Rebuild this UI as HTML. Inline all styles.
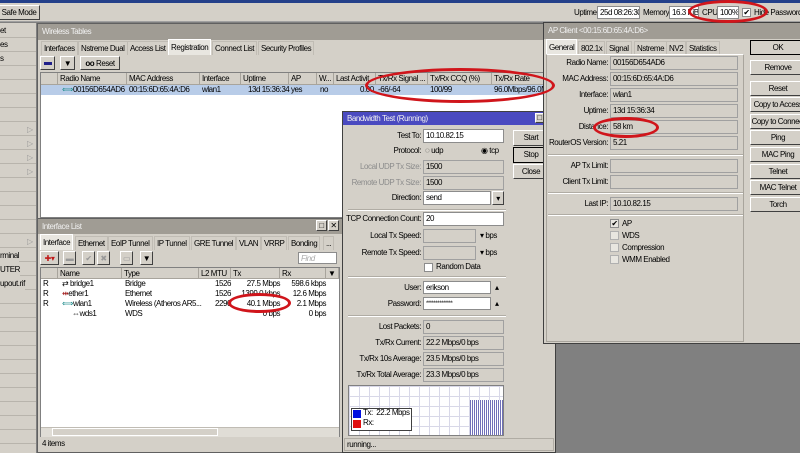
<!DOCTYPE html>
<html><head><meta charset="utf-8"><style>
*{box-sizing:border-box;margin:0;padding:0}
body{width:800px;height:453px;overflow:hidden;position:relative;background:#808080;font-family:"Liberation Sans",sans-serif;font-size:8px;color:#000;letter-spacing:-0.45px}
div,span{position:absolute;white-space:nowrap}
.g{background:#d4d0c8}
.t{line-height:12px}
.btn{background:#d4d0c8;border:1px solid;border-color:#fff #404040 #404040 #fff;text-align:center;line-height:13px;overflow:hidden}
.in{background:#fff;border:1px solid #8c8c8c;padding-left:2px;line-height:12px;overflow:hidden}
.ro{background:#d4d0c8;border:1px solid #a0a0a0;padding-left:2px;line-height:12px}
.lb{text-align:right;line-height:14px}
.dis{color:#8c8c8c}
.tab{background:#d4d0c8;border:1px solid #c0bcb4;border-bottom:none;line-height:13px;padding:0 2px}
.tsel{background:#e8e6e0;border:1px solid #fff;border-bottom:none}
.hdr{background:#d4d0c8;border-right:1px solid #a8a49c;border-bottom:1px solid #a8a49c;line-height:11px;padding-left:2px;overflow:hidden}
.cell{line-height:10px;padding-left:2px}
.ttl{color:#f0f0f0;line-height:16px;padding-left:4px}
.sep{border-top:1px solid #b0aca4;border-bottom:1px solid #fff;height:2px}
.ell{border:3px solid #d0151b;border-radius:50%}
.cb{width:9px;height:9px;background:#fff;border:1px solid #8c8c8c}
</style></head><body>
<div style="left:0;top:0;width:800px;height:3px;background:#24408a"></div>
<div class="g" style="left:0;top:3px;width:800px;height:19px;border-bottom:1px solid #a0a0a0"></div>
<div class="btn" style="left:-2px;top:5px;width:42px;height:15px">Safe Mode</div>
<div class="t" style="left:574px;top:7px">Uptime:</div><div class="in" style="left:597px;top:6px;width:43px;height:13px">25d 08:26:30</div>
<div class="t" style="left:643px;top:7px">Memory:</div><div class="in" style="left:669px;top:6px;width:30px;height:13px">16.3 KiB</div>
<div class="t" style="left:702px;top:7px">CPU:</div><div class="in" style="left:717px;top:6px;width:22px;height:13px">100%</div>
<div class="cb" style="left:742px;top:8px;font-size:8px;line-height:7px;text-align:center">✔</div>
<div class="t" style="left:754px;top:7px">Hide Passwords</div>
<div class="g" style="left:0;top:23px;width:37px;height:430px;border-right:1px solid #808080"></div>
<div style="left:0;top:24px;width:36px;height:420px;background:repeating-linear-gradient(#d4d0c8 0 13px,#b8b4ac 13px 14px)"></div>
<div class="t" style="left:0;top:25px">et</div><div class="t" style="left:0;top:39px">es</div><div class="t" style="left:0;top:53px">s</div>
<div style="left:27px;top:124px;color:#999;line-height:12px">▷</div><div style="left:27px;top:138px;color:#999;line-height:12px">▷</div><div style="left:27px;top:152px;color:#999;line-height:12px">▷</div><div style="left:27px;top:166px;color:#999;line-height:12px">▷</div><div style="left:27px;top:236px;color:#999;line-height:12px">▷</div>
<div class="t" style="left:0;top:250px;background:#d4d0c8">rminal</div><div class="t" style="left:0;top:264px;background:#d4d0c8">UTER</div><div class="t" style="left:0;top:278px;background:#d4d0c8">upout.rif</div>
<div class="g" style="left:37px;top:23px;width:510px;height:197px;border:1px solid #606060"></div>
<div class="ttl" style="left:38px;top:24px;width:508px;height:16px;background:#a09c94">Wireless Tables</div>
<div class="tab" style="left:41px;top:41px">Interfaces</div><div class="tab" style="left:78px;top:41px">Nstreme Dual</div><div class="tab" style="left:127px;top:41px">Access List</div><div class="tab tsel" style="left:168px;top:39px;line-height:15px">Registration</div><div class="tab" style="left:212px;top:41px">Connect List</div><div class="tab" style="left:258px;top:41px">Security Profiles</div>
<div class="btn" style="left:40px;top:56px;width:15px;height:14px"><span style="left:3px;top:5px;width:8px;height:3px;background:#20208a"></span></div>
<div class="btn" style="left:60px;top:56px;width:15px;height:14px">▼</div>
<div class="btn" style="left:80px;top:56px;width:40px;height:14px"><b>oo</b> Reset</div>
<div style="left:40px;top:72px;width:506px;height:146px;background:#fff;border:1px solid #808080"></div>
<div class="hdr" style="left:41px;top:73px;width:17px;height:12px"></div>
<div class="hdr" style="left:58px;top:73px;width:69px;height:12px">Radio Name</div>
<div class="hdr" style="left:127px;top:73px;width:73px;height:12px">MAC Address</div>
<div class="hdr" style="left:200px;top:73px;width:41px;height:12px">Interface</div>
<div class="hdr" style="left:241px;top:73px;width:48px;height:12px">Uptime</div>
<div class="hdr" style="left:289px;top:73px;width:28px;height:12px">AP</div>
<div class="hdr" style="left:317px;top:73px;width:17px;height:12px">W...</div>
<div class="hdr" style="left:334px;top:73px;width:42px;height:12px">Last Activit</div>
<div class="hdr" style="left:376px;top:73px;width:52px;height:12px">Tx/Rx Signal ...</div>
<div class="hdr" style="left:428px;top:73px;width:64px;height:12px">Tx/Rx CCQ (%)</div>
<div class="hdr" style="left:492px;top:73px;width:54px;height:12px">Tx/Rx Rate</div>
<div style="left:41px;top:85px;width:505px;height:10px;background:#b8cce8"></div>
<div class="cell" style="left:60px;top:85px"><span style="left:0;color:#1a8a8a;position:relative">⟺</span>00156D654AD6</div>
<div class="cell" style="left:127px;top:85px">00:15:6D:65:4A:D6</div>
<div class="cell" style="left:200px;top:85px">wlan1</div>
<div class="cell" style="left:246px;top:85px">13d 15:36:34</div>
<div class="cell" style="left:289px;top:85px">yes</div>
<div class="cell" style="left:318px;top:85px">no</div>
<div class="cell" style="left:358px;top:85px">0.00</div>
<div class="cell" style="left:376px;top:85px">-66/-64</div>
<div class="cell" style="left:428px;top:85px">100/99</div>
<div class="cell" style="left:492px;top:85px">96.0Mbps/96.0M</div>
<div class="g" style="left:37px;top:218px;width:307px;height:235px;border:1px solid #606060"></div>
<div class="ttl" style="left:38px;top:219px;width:305px;height:15px;background:#a09c94;line-height:15px">Interface List</div>
<div class="btn" style="left:316px;top:220px;width:11px;height:11px;line-height:9px">□</div><div class="btn" style="left:328px;top:220px;width:11px;height:11px;line-height:9px">✕</div>
<div class="tab tsel" style="left:40px;top:234px;line-height:15px">Interface</div><div class="tab" style="left:75px;top:236px">Ethernet</div><div class="tab" style="left:108px;top:236px">EoIP Tunnel</div><div class="tab" style="left:154px;top:236px">IP Tunnel</div><div class="tab" style="left:191px;top:236px">GRE Tunnel</div><div class="tab" style="left:236px;top:236px">VLAN</div><div class="tab" style="left:261px;top:236px">VRRP</div><div class="tab" style="left:288px;top:236px">Bonding</div><div class="tab" style="left:323px;top:236px">...</div>
<div class="btn" style="left:40px;top:251px;width:19px;height:14px;color:#c01818">✚▾</div>
<div class="btn" style="left:63px;top:251px;width:13px;height:14px;color:#999">▬</div>
<div class="btn" style="left:82px;top:251px;width:13px;height:14px;color:#999">✔</div>
<div class="btn" style="left:97px;top:251px;width:13px;height:14px;color:#999">✖</div>
<div class="btn" style="left:120px;top:251px;width:13px;height:14px;color:#999">▭</div>
<div class="btn" style="left:140px;top:251px;width:13px;height:14px">▼</div>
<div class="in" style="left:298px;top:252px;width:39px;height:12px;color:#aaa;font-style:italic">Find</div>
<div style="left:40px;top:267px;width:300px;height:170px;background:#fff;border:1px solid #808080"></div>
<div class="hdr" style="left:41px;top:268px;width:17px;height:11px"></div>
<div class="hdr" style="left:58px;top:268px;width:64px;height:11px">Name</div>
<div class="hdr" style="left:122px;top:268px;width:77px;height:11px">Type</div>
<div class="hdr" style="left:199px;top:268px;width:32px;height:11px">L2 MTU</div>
<div class="hdr" style="left:231px;top:268px;width:49px;height:11px">Tx</div>
<div class="hdr" style="left:280px;top:268px;width:46px;height:11px">Rx</div>
<div class="hdr" style="left:326px;top:268px;width:13px;height:11px">▼</div>
<div class="cell" style="left:41px;top:279px">R</div><div class="cell" style="left:60px;top:279px">⇄ bridge1</div><div class="cell" style="left:123px;top:279px">Bridge</div><div class="cell" style="left:199px;top:279px;width:32px;text-align:right">1526</div><div class="cell" style="left:231px;top:279px;width:49px;text-align:right">27.5 Mbps</div><div class="cell" style="left:280px;top:279px;width:46px;text-align:right">598.6 kbps</div>
<div class="cell" style="left:41px;top:289px">R</div><div class="cell" style="left:60px;top:289px"><span style="position:relative;color:#a01818">⇹</span>ether1</div><div class="cell" style="left:123px;top:289px">Ethernet</div><div class="cell" style="left:199px;top:289px;width:32px;text-align:right">1526</div><div class="cell" style="left:231px;top:289px;width:49px;text-align:right">1399.0 kbps</div><div class="cell" style="left:280px;top:289px;width:46px;text-align:right">12.6 Mbps</div>
<div class="cell" style="left:41px;top:299px">R</div><div class="cell" style="left:60px;top:299px"><span style="position:relative;color:#1a8a8a">⟺</span>wlan1</div><div class="cell" style="left:123px;top:299px">Wireless (Atheros AR5...</div><div class="cell" style="left:199px;top:299px;width:32px;text-align:right">2290</div><div class="cell" style="left:231px;top:299px;width:49px;text-align:right">40.1 Mbps</div><div class="cell" style="left:280px;top:299px;width:46px;text-align:right">2.1 Mbps</div>
<div class="cell" style="left:70px;top:309px">⇔wds1</div><div class="cell" style="left:123px;top:309px">WDS</div><div class="cell" style="left:231px;top:309px;width:49px;text-align:right">0 bps</div><div class="cell" style="left:280px;top:309px;width:46px;text-align:right">0 bps</div>
<div style="left:41px;top:427px;width:298px;height:10px;background:#e0ddd6;border-top:1px solid #c0bcb4"></div>
<div style="left:52px;top:428px;width:166px;height:8px;background:#d4d0c8;border:1px solid #fff"></div>
<div class="t" style="left:42px;top:437px;line-height:13px">4 items</div>
<div class="g" style="left:342px;top:111px;width:214px;height:342px;border:1px solid #404040"></div>
<div class="ttl" style="left:343px;top:112px;width:212px;height:13px;background:#4a4ac0;line-height:13px">Bandwidth Test (Running)</div>
<div class="btn" style="left:535px;top:113px;width:9px;height:10px;line-height:8px">□</div><div class="btn" style="left:545px;top:113px;width:9px;height:10px;line-height:8px">✕</div>
<div class="btn" style="left:513px;top:130px;width:36px;height:16px">Start</div>
<div class="btn" style="left:513px;top:147px;width:36px;height:16px;border:1px solid #000">Stop</div>
<div class="btn" style="left:513px;top:164px;width:36px;height:15px">Close</div>
<div class="lb" style="left:345px;top:129px;width:76px">Test To:</div><div class="in" style="left:423px;top:129px;width:81px;height:14px">10.10.82.15</div>
<div class="lb" style="left:345px;top:144px;width:76px">Protocol:</div><div class="t" style="left:425px;top:145px">◌ udp</div><div class="t" style="left:481px;top:145px">◉ tcp</div>
<div class="lb dis" style="left:345px;top:160px;width:76px">Local UDP Tx Size:</div><div class="ro" style="left:423px;top:160px;width:81px;height:14px">1500</div>
<div class="lb dis" style="left:345px;top:176px;width:76px">Remote UDP Tx Size:</div><div class="ro" style="left:423px;top:176px;width:81px;height:14px">1500</div>
<div class="lb" style="left:345px;top:191px;width:76px">Direction:</div><div class="in" style="left:423px;top:191px;width:68px;height:14px">send</div><div class="btn" style="left:492px;top:191px;width:12px;height:14px">▾</div>
<div class="sep" style="left:348px;top:209px;width:158px"></div>
<div class="lb" style="left:345px;top:212px;width:76px">TCP Connection Count:</div><div class="in" style="left:423px;top:212px;width:81px;height:14px">20</div>
<div class="lb" style="left:345px;top:229px;width:76px">Local Tx Speed:</div><div class="ro" style="left:423px;top:229px;width:53px;height:14px"></div><div class="t" style="left:480px;top:230px">▾ bps</div>
<div class="lb" style="left:345px;top:246px;width:76px">Remote Tx Speed:</div><div class="ro" style="left:423px;top:246px;width:53px;height:14px"></div><div class="t" style="left:480px;top:247px">▾ bps</div>
<div class="cb" style="left:424px;top:263px"></div><div class="t" style="left:436px;top:261px">Random Data</div>
<div class="sep" style="left:348px;top:276px;width:158px"></div>
<div class="lb" style="left:345px;top:281px;width:76px">User:</div><div class="in" style="left:423px;top:281px;width:68px;height:13px">erikson</div><div class="t" style="left:495px;top:282px">▴</div>
<div class="lb" style="left:345px;top:297px;width:76px">Password:</div><div class="in" style="left:423px;top:297px;width:68px;height:13px;font-size:6px">**************</div><div class="t" style="left:495px;top:298px">▴</div>
<div class="sep" style="left:348px;top:315px;width:158px"></div>
<div class="lb" style="left:345px;top:320px;width:76px">Lost Packets:</div><div class="ro" style="left:423px;top:320px;width:81px;height:14px">0</div>
<div class="lb" style="left:345px;top:336px;width:76px">Tx/Rx Current:</div><div class="ro" style="left:423px;top:336px;width:81px;height:14px">22.2 Mbps/0 bps</div>
<div class="lb" style="left:345px;top:352px;width:76px">Tx/Rx 10s Average:</div><div class="ro" style="left:423px;top:352px;width:81px;height:14px">23.5 Mbps/0 bps</div>
<div class="lb" style="left:345px;top:368px;width:76px">Tx/Rx Total Average:</div><div class="ro" style="left:423px;top:368px;width:81px;height:14px">23.3 Mbps/0 bps</div>
<div style="left:348px;top:385px;width:156px;height:51px;border:1px solid #808080;background-color:#fff;background-image:linear-gradient(90deg,#d8d8e8 1px,transparent 1px),linear-gradient(#d8d8e8 1px,transparent 1px);background-size:10px 10px"></div>
<div style="left:470px;top:400px;width:33px;height:35px;background:repeating-linear-gradient(90deg,#7070b8 0 1px,#fff 1px 2px)"></div>
<div style="left:351px;top:408px;width:61px;height:23px;background:#fff;border:1px solid #404040"></div>
<div style="left:353px;top:410px;width:8px;height:8px;background:#0010e0"></div><div class="t" style="left:363px;top:408px;line-height:10px">Tx:&nbsp; 22.2 Mbps</div>
<div style="left:353px;top:420px;width:8px;height:8px;background:#e01010"></div><div class="t" style="left:363px;top:418px;line-height:10px">Rx:</div>
<div style="left:344px;top:438px;width:210px;height:13px;border:1px solid #b0aca4;line-height:11px;padding-left:2px">running...</div>
<div class="g" style="left:543px;top:22px;width:258px;height:322px;border:1px solid #404040"></div>
<div class="ttl" style="left:544px;top:23px;width:256px;height:16px;background:#a09c94">AP Client &lt;00:15:6D:65:4A:D6&gt;</div>
<div class="tab tsel" style="left:546px;top:39px;line-height:15px">General</div><div class="tab" style="left:578px;top:41px">802.1x</div><div class="tab" style="left:606px;top:41px">Signal</div><div class="tab" style="left:634px;top:41px">Nstreme</div><div class="tab" style="left:666px;top:41px">NV2</div><div class="tab" style="left:686px;top:41px">Statistics</div>
<div style="left:546px;top:54px;width:198px;height:288px;border:1px solid #a8a49c;border-top:1px solid #fff"></div>
<div class="lb" style="left:548px;top:56px;width:60px">Radio Name:</div><div class="ro" style="left:610px;top:56px;width:128px;height:14px">00156D654AD6</div>
<div class="lb" style="left:548px;top:72px;width:60px">MAC Address:</div><div class="ro" style="left:610px;top:72px;width:128px;height:14px">00:15:6D:65:4A:D6</div>
<div class="lb" style="left:548px;top:88px;width:60px">Interface:</div><div class="ro" style="left:610px;top:88px;width:128px;height:14px">wlan1</div>
<div class="lb" style="left:548px;top:104px;width:60px">Uptime:</div><div class="ro" style="left:610px;top:104px;width:128px;height:14px">13d 15:36:34</div>
<div class="lb" style="left:548px;top:120px;width:60px">Distance:</div><div class="ro" style="left:610px;top:120px;width:128px;height:14px">58 km</div>
<div class="lb" style="left:548px;top:136px;width:60px">RouterOS Version:</div><div class="ro" style="left:610px;top:136px;width:128px;height:14px">5.21</div>
<div class="sep" style="left:548px;top:154px;width:195px"></div>
<div class="lb" style="left:548px;top:159px;width:60px">AP Tx Limit:</div><div class="ro" style="left:610px;top:159px;width:128px;height:14px"></div>
<div class="lb" style="left:548px;top:175px;width:60px">Client Tx Limit:</div><div class="ro" style="left:610px;top:175px;width:128px;height:14px"></div>
<div class="sep" style="left:548px;top:192px;width:195px"></div>
<div class="lb" style="left:548px;top:197px;width:60px">Last IP:</div><div class="ro" style="left:610px;top:197px;width:128px;height:14px">10.10.82.15</div>
<div class="sep" style="left:548px;top:214px;width:195px"></div>
<div class="cb" style="left:610px;top:219px;background:#e8e6e0;font-size:8px;line-height:7px;text-align:center">✔</div><div class="t" style="left:622px;top:218px">AP</div>
<div class="cb" style="left:610px;top:231px;background:#e8e6e0;border-color:#b0b0b0"></div><div class="t" style="left:622px;top:230px">WDS</div>
<div class="cb" style="left:610px;top:243px;background:#e8e6e0;border-color:#b0b0b0"></div><div class="t" style="left:622px;top:242px">Compression</div>
<div class="cb" style="left:610px;top:255px;background:#e8e6e0;border-color:#b0b0b0"></div><div class="t" style="left:622px;top:254px">WMM Enabled</div>
<div class="btn" style="left:750px;top:40px;width:56px;height:15px;border:1px solid #000">OK</div>
<div class="btn" style="left:750px;top:60px;width:56px;height:15px">Remove</div>
<div class="btn" style="left:750px;top:81px;width:56px;height:15px">Reset</div>
<div class="btn" style="left:750px;top:97px;width:56px;height:15px">Copy to Access</div>
<div class="btn" style="left:750px;top:114px;width:56px;height:15px">Copy to Connect</div>
<div class="btn" style="left:750px;top:130px;width:56px;height:15px">Ping</div>
<div class="btn" style="left:750px;top:147px;width:56px;height:15px">MAC Ping</div>
<div class="btn" style="left:750px;top:164px;width:56px;height:15px">Telnet</div>
<div class="btn" style="left:750px;top:180px;width:56px;height:15px">MAC Telnet</div>
<div class="btn" style="left:750px;top:197px;width:56px;height:15px">Torch</div>
<div class="ell" style="left:688px;top:0px;width:80px;height:23px"></div>
<div class="ell" style="left:365px;top:68px;width:190px;height:35px"></div>
<div class="ell" style="left:593px;top:117px;width:66px;height:21px"></div>
<div class="ell" style="left:228px;top:293px;width:63px;height:20px"></div>
</body></html>
